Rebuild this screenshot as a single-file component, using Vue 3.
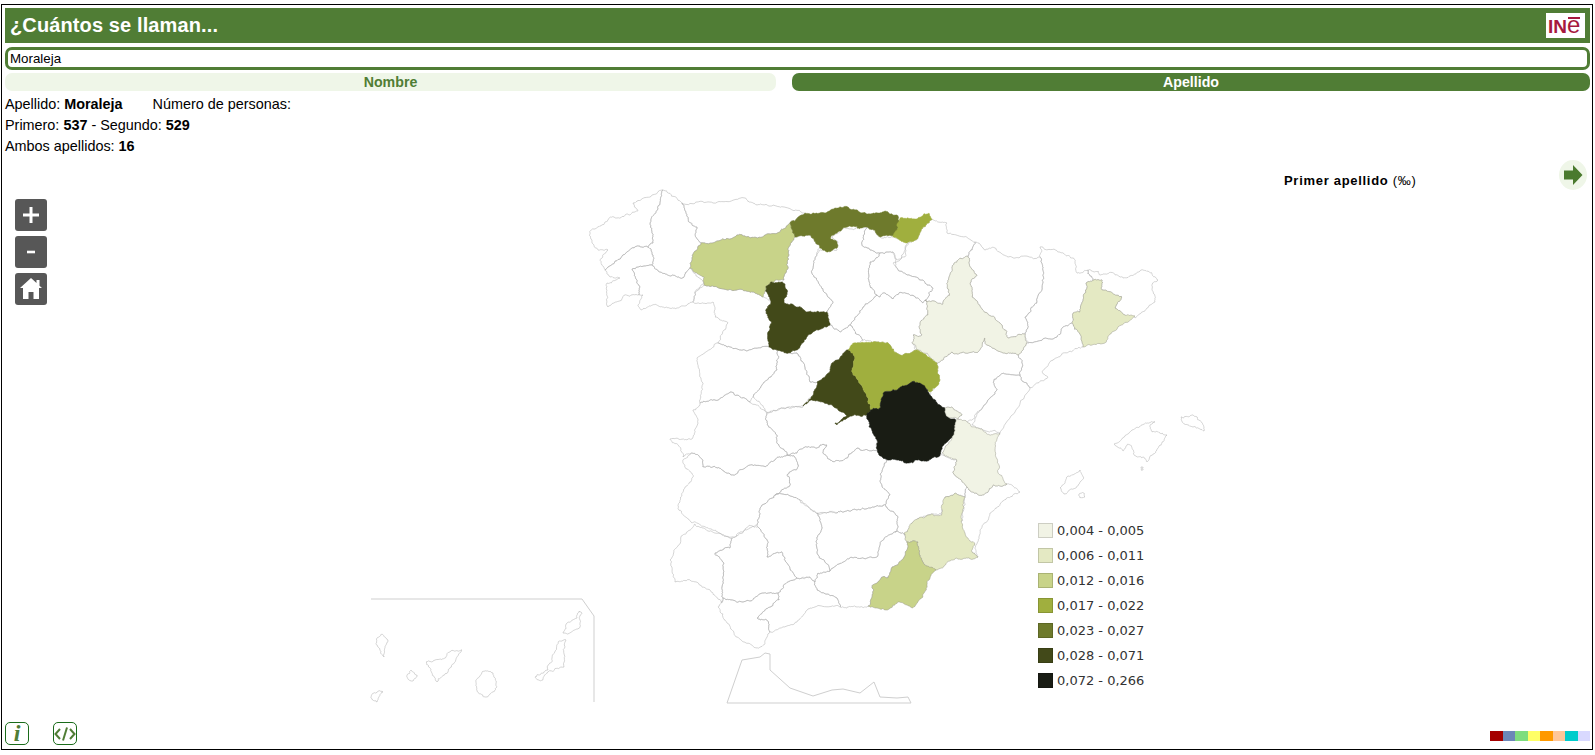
<script setup>
import { computed } from "vue"

const legend = [
  { color: "#f1f3e5", label: "0,004 - 0,005" },
  { color: "#e4e9c3", label: "0,006 - 0,011" },
  { color: "#c8d389", label: "0,012 - 0,016" },
  { color: "#a0af3e", label: "0,017 - 0,022" },
  { color: "#6e7a2c", label: "0,023 - 0,027" },
  { color: "#424919", label: "0,028 - 0,071" },
  { color: "#191c14", label: "0,072 - 0,266" }
]

const palette = ["#a50000", "#6c87b8", "#7edd7e", "#ffff66", "#ff9900", "#ffc699", "#00cccc", "#d9d9ff"]

const [c1, c2, c3, c4, c5, c6, c7] = legend.map(l => l.color)

// outlines in page pixels
const provinces = [
  { pts: "663,190 652,195 633,203 638,210 630,215 612,217 605,222 590,233 592,243 598,250 608,250 600,260 605,270 632,248 648,247 653,243 650,223 660,203" },
  { pts: "605,270 632,248 648,247 653,255 652,265 632,269 640,287 639,295 625,295 608,307 607,283 620,278 610,277" },
  { pts: "652,265 660,272 673,275 683,278 690,268 704,283 695,292 693,302 677,308 663,307 652,305 642,310 638,305 643,295 639,295 640,287 632,269" },
  { pts: "663,190 682,203 686,212 689,222 697,227 695,235 701,243 692,258 690,268 683,278 673,275 660,272 652,265 653,255 648,247 653,243 650,223 660,203" },
  { pts: "682,203 713,203 745,198 753,203 773,205 805,213 790,223 780,232 750,238 737,235 718,241 701,243 695,235 697,227 689,222 686,212" },
  { pts: "795,237 810,235 820,248 815,258 813,275 823,290 833,302 827,312 807,312 797,307 784,303 787,293 782,282 784,280 788,267 788,248" },
  { pts: "704,285 737,290 755,293 763,297 771,302 766,313 772,323 768,332 769,347 745,350 727,347 718,343 728,323 715,317 713,302 693,302 695,292" },
  { pts: "718,343 727,347 745,350 769,347 777,350 779,357 777,370 762,385 753,397 750,402 730,392 715,400 700,403 703,383 697,358" },
  { pts: "777,350 790,353 797,353 805,367 810,382 817,382 813,395 803,407 783,408 768,413 762,405 753,397 762,385 777,370 779,357" },
  { pts: "830,325 840,332 850,325 863,340 848,350 832,363 830,372 817,382 810,382 805,367 797,353 790,353 800,347 807,337" },
  { pts: "767,413 783,408 803,406 812,400 818,401 832,405 847,415 835,423 837,425 850,416 867,415 869,427 877,440 878,452 857,448 847,458 833,462 823,453 827,445 820,445 817,448 805,447 797,453 787,455 777,443 777,435 767,423" },
  { pts: "700,403 715,400 730,392 750,402 767,413 767,423 777,435 777,443 787,455 778,457 765,467 750,465 733,475 717,468 703,467 700,457 692,453 683,457 678,445 670,439 692,439 698,420 693,410" },
  { pts: "683,460 692,453 700,457 703,467 717,468 733,475 750,465 765,467 778,457 787,455 795,457 798,467 787,475 790,485 775,495 760,508 757,525 752,527 733,537 718,532 697,523 692,523 678,508 683,492 693,477 683,463" },
  { pts: "787,455 797,453 805,447 817,448 820,445 827,445 823,453 833,462 847,458 857,448 878,452 887,460 882,470 880,482 890,495 885,505 870,508 857,510 837,513 817,514 800,500 783,494 775,495 790,485 787,475 798,467 795,457" },
  { pts: "883,458 897,460 907,463 915,460 927,461 940,455 957,460 953,473 967,487 965,497 955,493 945,497 942,513 933,514 912,523 905,535 895,532 898,527 898,517 885,505 890,495 880,482 882,470 887,460" },
  { pts: "965,497 967,487 972,492 983,495 993,485 1007,484 1020,492 1003,501 990,513 980,530 975,548 978,557 972,552 965,545 960,535 963,517 965,505" },
  { pts: "895,532 905,535 907,542 907,550 902,560 892,567 888,578 882,577 872,586 873,593 868,606 857,607 847,608 840,607 838,600 817,590 815,582 818,573 830,571 850,558 867,558 877,557 880,543" },
  { pts: "817,513 822,527 817,537 818,555 830,571 850,558 867,558 877,557 880,543 895,532 898,527 898,517 885,505 870,508 857,510 837,513" },
  { pts: "758,527 768,543 767,557 782,552 787,563 797,578 810,577 815,582 818,573 830,571 818,555 817,537 822,527 817,513 800,500 783,494 775,495 760,508 757,525" },
  { pts: "810,577 800,579 788,582 778,593 779,600 768,608 757,618 767,620 770,632 797,622 810,608 840,607 838,600 817,590 815,582" },
  { pts: "732,538 750,525 758,527 768,543 767,557 782,552 787,563 797,578 788,582 778,593 762,593 743,602 723,598 722,587 724,563 715,553 730,548" },
  { pts: "695,524 683,535 670,560 675,582 690,580 710,590 722,603 723,598 722,587 724,563 715,553 730,548 732,538 713,532" },
  { pts: "723,598 718,607 727,623 737,637 757,648 765,643 770,632 767,620 757,618 768,608 779,600 778,593 762,593 743,602" },
  { pts: "867,227 875,230 880,237 893,237 908,243 905,257 897,260 893,252 880,253 870,250 862,245" },
  { pts: "820,250 837,250 838,242 832,238 843,228 867,227 862,245 870,250 880,253 870,262 869,280 877,295 863,307 850,325 840,332 830,325 827,312 833,302 823,290 813,275 815,258" },
  { pts: "870,262 880,253 893,252 897,268 923,280 933,288 925,300 923,303 913,295 900,292 893,299 885,293 880,297 877,295 869,280" },
  { pts: "877,295 880,297 885,293 893,299 900,292 913,295 923,303 925,300 928,315 920,323 922,335 913,335 912,343 917,350 900,355 888,343 877,342 863,340 850,325 863,307" },
  { pts: "932,219 947,223 947,233 975,242 968,256 958,260 952,267 947,283 950,295 943,304 925,300 933,288 923,280 897,268 893,263 900,260 908,243 918,238 923,227" },
  { pts: "975,242 985,250 995,248 1008,257 1040,257 1043,268 1043,283 1037,303 1025,317 1028,327 1025,334 1008,338 1002,325 987,313 972,297 970,283 977,275 970,267 968,256" },
  { pts: "1040,257 1040,247 1060,252 1073,258 1077,273 1088,270 1093,280 1086,283 1083,300 1080,312 1073,313 1072,323 1063,327 1057,337 1028,343 1025,334 1028,327 1025,317 1037,303 1043,283 1043,268" },
  { pts: "1088,270 1098,271 1100,275 1113,273 1125,278 1143,270 1152,273 1158,280 1152,285 1155,302 1135,318 1125,315 1115,307 1122,297 1102,290 1102,280 1093,280" },
  { pts: "1028,343 1057,337 1063,327 1072,323 1077,330 1083,347 1063,353 1050,362 1042,372 1048,377 1030,388 1020,375 1022,363 1018,355 1027,343" },
  { pts: "1003,373 1020,375 1030,388 1000,433 983,430 972,425 983,407 997,390 993,382" },
  { pts: "937,363 952,352 965,353 978,352 985,338 987,345 1005,353 1018,355 1022,363 1020,375 1003,373 993,382 997,390 983,407 972,420 967,422 958,419 962,415 952,407 945,408 930,395 940,380" },
  // islands
  { pts: "1114,444 1132,430 1147,423 1155,422 1150,427 1152,432 1160,433 1167,435 1158,448 1147,462 1143,457 1135,456 1132,447 1128,444 1123,451 1118,447" },
  { pts: "1181,417 1193,415 1202,423 1204,431 1190,426 1182,422" },
  { pts: "1060,488 1068,476 1080,470 1084,478 1076,488 1064,494" },
  { pts: "1079,494 1084,493 1085,497 1080,498" },
  { pts: "1141,467 1143,467 1143,470 1141,470" },
  { pts: "377,638 382,634 388,640 384,657 378,647" },
  { pts: "407,675 411,670 417,675 413,681 408,679" },
  { pts: "426,662 445,658 450,652 462,650 457,657 448,672 437,682 432,673" },
  { pts: "482,672 493,673 497,687 487,697 477,690 476,682" },
  { pts: "371,696 378,691 383,692 377,702 371,698" },
  { pts: "535,677 548,670 552,658 559,641 566,640 564,667 548,672 543,680" },
  { pts: "563,633 567,623 577,618 579,611 582,613 580,627 568,634" },
  // provinces with data
  { fill: c3, pts: "701,243 718,241 737,235 750,238 780,232 790,223 795,237 788,248 788,267 784,280 772,282 766,287 763,297 755,293 737,290 704,285 704,277 690,268 692,258" },
  { fill: c6, pts: "766,287 772,282 782,282 787,293 784,303 797,307 807,312 827,312 830,325 807,337 800,347 790,353 777,350 769,347 768,332 772,323 766,313 771,302" },
  { fill: c5, pts: "790,223 805,213 827,212 837,208 848,207 862,213 870,215 863,227 843,228 830,238 837,243 837,248 827,252 820,248 810,235 795,237" },
  { fill: c5, pts: "857,222 873,213 885,211 897,215 900,223 895,235 880,237 875,230 867,227 857,228" },
  { fill: c4, pts: "900,218 913,219 929,213 932,219 923,227 918,238 907,243 893,237 897,230" },
  { fill: c1, pts: "968,256 958,260 952,267 947,283 950,295 943,304 925,300 928,315 920,323 922,335 913,335 912,343 920,350 937,363 952,352 965,353 978,352 985,338 987,345 1005,353 1018,355 1027,343 1025,334 1008,338 1002,325 987,313 972,297 970,283 977,275 970,267" },
  { fill: c2, pts: "1086,283 1093,280 1102,280 1102,290 1122,297 1115,307 1125,315 1135,316 1112,332 1105,343 1083,347 1077,330 1072,323 1073,313 1080,312 1083,300" },
  { fill: c6, pts: "848,350 855,358 852,372 863,388 868,403 871,410 867,415 850,416 837,425 835,423 847,415 832,405 818,401 812,400 803,406 813,395 817,382 830,372 832,363" },
  { fill: c4, pts: "852,345 877,342 888,343 900,355 917,350 937,363 940,380 930,392 923,385 913,381 897,390 883,393 880,408 871,410 868,403 863,388 852,372 855,358 848,350" },
  { fill: c7, pts: "871,410 880,408 883,393 897,390 913,381 923,385 930,395 945,408 948,417 956,420 952,437 942,447 940,455 927,461 915,460 907,463 897,460 883,458 878,453 877,440 869,427 867,415" },
  { fill: c1, pts: "942,453 952,437 956,420 967,422 972,427 983,430 990,435 1000,433 995,450 998,470 1007,484 993,485 983,495 972,492 967,487 953,473 957,460" },
  { fill: c1, pts: "945,408 952,407 962,415 958,419 948,417" },
  { fill: c2, pts: "945,497 955,493 965,497 961,517 965,533 975,545 972,552 978,557 963,559 953,560 937,570 925,565 919,553 918,542 907,542 904,533 913,522 932,514 942,515 943,502" },
  { fill: c3, pts: "907,542 918,542 919,553 925,565 936,570 927,582 923,597 912,608 898,602 887,610 868,606 873,593 872,586 882,577 888,578 892,567 902,560 907,550" }
]

// Africa coast and the Canary frame stay plain lines
const lines = [
  "727,703 742,660 760,657 765,653 770,654 770,670 790,688 813,696 832,690 843,689 860,693 874,682 880,697 897,698 908,697 911,703 727,703",
  "371,599 582,599 594,616 594,702"
]

const noise = (x, y) => {
  const s = Math.sin(x * 12.9898 + y * 78.233) * 43758.5453
  return s - Math.floor(s) - 0.5
}

// wobble a segment, same result in both directions so neighbours share the border
function wobble(a, b, depth) {
  const len = Math.hypot(b[0] - a[0], b[1] - a[1])
  if (depth == 0 || len < 1) return []
  const k = Math.min(len * 0.4, 2.4)
  const mx = (a[0] + b[0]) / 2
  const my = (a[1] + b[1]) / 2
  const m = [mx + noise(mx, my) * k, my + noise(my, mx) * k]
  return [...wobble(a, m, depth - 1), m, ...wobble(m, b, depth - 1)]
}

function toPath(str) {
  const pts = str.split(" ").map(p => p.split(",").map(Number))
  const out = []
  pts.forEach((p, i) => {
    out.push(p, ...wobble(p, pts[(i + 1) % pts.length], 4))
  })
  return "M" + out.map(p => p[0].toFixed(1) + " " + p[1].toFixed(1)).join("L") + "Z"
}

function edgeColor(fill) {
  if (!fill) return "#aaaaaa"
  if (fill == c5 || fill == c6 || fill == c7 || fill == c4) return fill
  return "#9a9a8c"
}

const shapes = computed(() => provinces.map(p => ({
  d: toPath(p.pts),
  fill: p.fill || "none",
  stroke: edgeColor(p.fill)
})))
</script>

<template>
  <div class="frame">
    <header class="title-bar">
      <h1>¿Cuántos se llaman...</h1>
      <div class="ine-logo">IN<span class="ine-e">e</span></div>
    </header>

    <input class="search" type="text" value="Moraleja">

    <div class="tabs">
      <div class="tab">Nombre</div>
      <div class="tab active">Apellido</div>
    </div>

    <div class="info">
      <div>Apellido: <b>Moraleja</b><span class="people">Número de personas:</span></div>
      <div>Primero: <b>537</b> - Segundo: <b>529</b></div>
      <div>Ambos apellidos: <b>16</b></div>
    </div>

    <div class="map">
      <svg class="map-svg" viewBox="5 157 1585 562">
        <path v-for="(s, i) in shapes" :key="i" :d="s.d" :fill="s.fill" :stroke="s.stroke" stroke-width="0.5" stroke-linejoin="round" />
        <polyline v-for="l in lines" :key="l" :points="l" fill="none" stroke="#cfcfcf" stroke-width="1" />
      </svg>

      <div class="zoom-controls">
        <button class="zoom-btn">
          <svg width="32" height="32" viewBox="0 0 32 32"><path d="M16 8v16M8 16h16" stroke="#fff" stroke-width="3" /></svg>
        </button>
        <button class="zoom-btn">
          <svg width="32" height="32" viewBox="0 0 32 32"><path d="M12 16h8" stroke="#fff" stroke-width="2.6" /></svg>
        </button>
        <button class="zoom-btn">
          <svg width="32" height="32" viewBox="0 0 32 32"><path d="M16 5 21.5 10V7H24.5V12.7L27 15H24V26H18.5V19H13.5V26H8V15H5Z" fill="#fff" /></svg>
        </button>
      </div>

      <div class="map-title"><b>Primer apellido</b> (‰)</div>

      <div class="next">
        <svg width="20" height="20" viewBox="0 0 20 20"><path d="M1 5.5H10V0L19.5 10 10 20V14.5H1Z" fill="#4a7a2e" /></svg>
      </div>

      <ul class="legend">
        <li v-for="l in legend" :key="l.label">
          <span class="swatch" :style="{ background: l.color }"></span>{{ l.label }}
        </li>
      </ul>
    </div>

    <footer class="bottom">
      <div class="tools">
        <div class="tool info-tool">i</div>
        <div class="tool">
          <svg width="22" height="16" viewBox="0 0 22 16"><path d="M6 3 1.5 8 6 13M16 3 20.5 8 16 13M13 1.5 9 14.5" fill="none" stroke="#507d35" stroke-width="2" /></svg>
        </div>
      </div>
      <div class="palette">
        <span v-for="c in palette" :key="c" :style="{ background: c }"></span>
      </div>
    </footer>
  </div>
</template>

<style>
html, body {
  margin: 0;
  overflow: hidden;
}
</style>

<style scoped>
.frame {
  box-sizing: border-box;
  width: 1592px;
  height: 746px;
  margin: 4px 0 0 1px;
  padding: 3px 2px 3px 3px;
  border: 1px solid #000;
  display: flex;
  flex-direction: column;
  font-family: "Liberation Sans", Arial, sans-serif;
  font-size: 14px;
  color: #000;
}
.title-bar {
  height: 35px;
  flex: none;
  background: #507d35;
  display: flex;
  align-items: center;
  justify-content: space-between;
  padding: 0 5px 0 5px;
}
.title-bar h1 {
  margin: 0;
  font-size: 20px;
  letter-spacing: 0.12px;
  font-weight: bold;
  color: #fff;
}
.ine-logo {
  width: 39px;
  height: 25px;
  box-sizing: border-box;
  padding-left: 2px;
  background: #fff;
  color: #a6193e;
  font-weight: bold;
  font-size: 19px;
  line-height: 27px;
  white-space: nowrap;
}
.ine-e {
  position: relative;
  display: inline-block;
  font-weight: normal;
  font-size: 24px;
  line-height: 20px;
}
.ine-e::after {
  content: "";
  position: absolute;
  left: 1px;
  right: 0;
  top: 2px;
  height: 2px;
  background: #a6193e;
}
.search {
  box-sizing: border-box;
  height: 23px;
  margin-top: 4px;
  flex: none;
  width: 100%;
  border: 3px solid #507d35;
  border-radius: 7px;
  padding: 0 2px;
  outline: none;
  font-family: "Liberation Sans", Arial, sans-serif;
  font-size: 13.33px;
  color: #000;
}
.tabs {
  display: flex;
  gap: 16px;
  margin-top: 3px;
  flex: none;
}
.tab {
  flex: 771 1 0;
  height: 18px;
  line-height: 18px;
  border-radius: 7px;
  background: #eff6e8;
  color: #507d35;
  font-weight: bold;
  font-size: 14.2px;
  text-align: center;
}
.tab.active {
  flex: 798 1 0;
  background: #507d35;
  color: #fff;
}
.info {
  flex: none;
  padding-top: 3px;
  font-size: 14.4px;
  line-height: 21px;
}
.people {
  margin-left: 30px;
}
.map {
  flex: 1;
  position: relative;
  min-height: 0;
}
.map-svg {
  position: absolute;
  inset: 0;
  width: 1585px;
  height: 562px;
}
.zoom-controls {
  position: absolute;
  left: 10px;
  top: 42px;
  display: flex;
  flex-direction: column;
  gap: 5px;
}
.zoom-btn {
  width: 32px;
  height: 32px;
  padding: 0;
  border: none;
  border-radius: 3px;
  background: #575757;
  display: block;
}
.zoom-btn svg {
  display: block;
}
.map-title {
  position: absolute;
  left: 1279px;
  top: 16px;
  font-size: 13px;
  letter-spacing: 0.7px;
  line-height: 16px;
}
.next {
  position: absolute;
  left: 1554px;
  top: 3px;
  width: 28px;
  height: 30px;
  border-radius: 50%;
  background: #eff6e8;
  display: flex;
  align-items: center;
  justify-content: center;
}
.legend {
  position: absolute;
  left: 1033px;
  top: 361px;
  margin: 0;
  padding: 0;
  list-style: none;
  font-family: "DejaVu Sans", Verdana, sans-serif;
  font-size: 13px;
  color: #333;
}
.legend li {
  display: flex;
  align-items: center;
  height: 25px;
}
.swatch {
  box-sizing: border-box;
  width: 15px;
  height: 15px;
  margin-right: 4px;
  border: 1px solid rgba(0, 0, 0, 0.15);
}
.bottom {
  flex: none;
  height: 23px;
  display: flex;
  justify-content: space-between;
  align-items: flex-end;
  margin-bottom: 1px;
}
.tools {
  display: flex;
  gap: 24px;
}
.tool {
  box-sizing: border-box;
  width: 24px;
  height: 23px;
  border: 1.5px solid #1a6b1a;
  border-radius: 5px;
  display: flex;
  align-items: center;
  justify-content: center;
}
.info-tool {
  font-family: "Liberation Serif", serif;
  font-style: italic;
  font-weight: bold;
  font-size: 24px;
  color: #507d35;
}
.palette {
  display: flex;
  margin-bottom: 4px;
}
.palette span {
  width: 12.5px;
  height: 10px;
}
</style>
